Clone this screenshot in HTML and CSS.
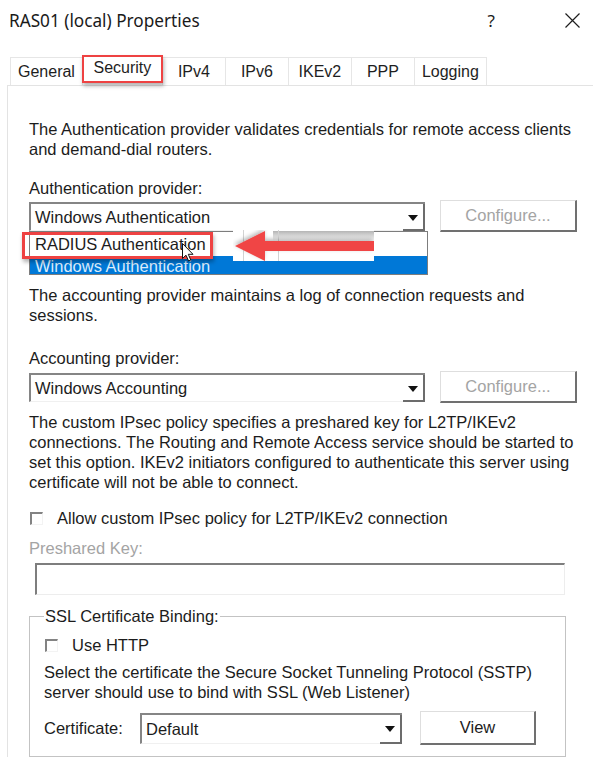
FILE: index.html
```html
<!DOCTYPE html>
<html>
<head>
<meta charset="utf-8">
<link rel="stylesheet" href="styles.css">
</head>
<body>
<div class="titlebar">
  <span class="title">RAS01 (local) Properties</span>
  <span class="help">?</span>
  <svg class="close" width="15" height="15" viewBox="0 0 15 15"><path d="M0.5 0.5 L14.5 14.5 M14.5 0.5 L0.5 14.5" stroke="#1e1e1e" stroke-width="1.2" fill="none"/></svg>
</div>
<div class="tabs">
  <div class="tab">General</div>
  <div class="tab tab-selected">Security</div>
  <div class="tab">IPv4</div>
  <div class="tab">IPv6</div>
  <div class="tab">IKEv2</div>
  <div class="tab">PPP</div>
  <div class="tab">Logging</div>
</div>
<div class="panel">
  <p class="text">The Authentication provider validates credentials for remote access clients<br>and demand-dial routers.</p>
  <div class="label label-auth">Authentication provider:</div>
  <div class="row">
    <div class="combo combo-wide">
      <span class="combo-value">Windows Authentication</span>
      <span class="drop"><span class="tri"></span></span>
      <div class="droplist">
        <div class="item">RADIUS Authentication</div>
        <div class="item item-hl">Windows Authentication</div>
      </div>
      <div class="redbox"></div>
      <svg class="arrow" width="141" height="31" viewBox="0 0 141 31">
        <defs>
          <linearGradient id="sh" x1="0" y1="0" x2="0" y2="1">
            <stop offset="0" stop-color="#b4b4b4"/>
            <stop offset="1" stop-color="#ffffff"/>
          </linearGradient>
          <filter id="ds" x="-20%" y="-60%" width="140%" height="220%">
            <feDropShadow dx="-1" dy="-2" stdDeviation="2" flood-color="#000" flood-opacity="0.28"/>
          </filter>
        </defs>
        <rect width="141" height="31" fill="#fff"/>
        <rect x="40" y="1" width="101" height="10" fill="url(#sh)"/>
        <path d="M10.5 0 V31 M45.5 0 V31" stroke="#d2d2d2" stroke-width="1"/>
        <path d="M2 16 L32 1 L32 11 L141 11 L141 21 L32 21 L32 31 Z" fill="#f04444" filter="url(#ds)"/>
      </svg>
      <svg class="cursor" width="12" height="19" viewBox="0 0 12 19"><path d="M0.5 0.5 V15.5 L4 12.2 L6.6 18 L8.8 17 L6.3 11.3 H11 Z" fill="#fff" stroke="#111" stroke-width="1"/></svg>
    </div>
    <div class="button button-disabled">Configure...</div>
  </div>
  <p class="text text-acct">The accounting provider maintains a log of connection requests and<br>sessions.</p>
  <div class="label label-acct">Accounting provider:</div>
  <div class="row row-acct">
    <div class="combo combo-wide">
      <span class="combo-value">Windows Accounting</span>
      <span class="drop"><span class="tri"></span></span>
    </div>
    <div class="button button-disabled">Configure...</div>
  </div>
  <p class="text text-ipsec">The custom IPsec policy specifies a preshared key for L2TP/IKEv2<br>connections. The Routing and Remote Access service should be started to<br>set this option. IKEv2 initiators configured to authenticate this server using<br>certificate will not be able to connect.</p>
  <div class="check-row check-ipsec">
    <span class="checkbox"></span>
    <span>Allow custom IPsec policy for L2TP/IKEv2 connection</span>
  </div>
  <div class="label label-disabled">Preshared Key:</div>
  <div class="textbox"></div>
  <fieldset class="group">
    <legend class="group-title">SSL Certificate Binding:</legend>
    <div class="check-row check-http">
      <span class="checkbox"></span>
      <span>Use HTTP</span>
    </div>
    <p class="text text-sstp">Select the certificate the Secure Socket Tunneling Protocol (SSTP)<br>server should use to bind with SSL (Web Listener)</p>
    <div class="cert-row">
      <span class="cert-label">Certificate:</span>
      <div class="combo combo-cert">
        <span class="combo-value">Default</span>
        <span class="drop"><span class="tri"></span></span>
      </div>
      <div class="button button-view">View</div>
    </div>
  </fieldset>
</div>
</body>
</html>
```
FILE: styles.css
```css
* { box-sizing: border-box; }
html, body { margin: 0; padding: 0; background: #fff; }
body {
  width: 593px;
  height: 769px;
  overflow: hidden;
  font-family: "Liberation Sans", Arial, sans-serif;
  font-size: 16.5px;
  color: #1c1c1c;
}

.titlebar {
  height: 40px;
  display: flex;
  align-items: center;
  padding: 0 13px 0 9px;
}
.title {
  flex: 1;
  font-family: "Noto Sans", sans-serif;
  font-size: 17.2px;
  color: #1a1a1a;
}
.help {
  font-family: "Noto Sans", sans-serif;
  font-size: 17px;
  color: #1a1a1a;
  margin-right: 70px;
}
.close { display: block; }

.tabs {
  display: flex;
  align-items: flex-end;
  height: 30px;
  margin-top: 15px;
  padding-left: 10px;
  position: relative;
  z-index: 2;
  font-size: 16px;
}
.tab {
  height: 28px;
  min-width: 64px;
  padding: 2px 7px 0;
  line-height: 24px;
  text-align: center;
  border: 1px solid #e6e6e6;
  border-bottom: none;
  margin-right: -1px;
  background: #fff;
  color: #1e1e1e;
}
.tab-selected {
  position: relative;
  z-index: 3;
  height: 28px;
  min-width: 81px;
  margin-bottom: 2px;
  padding: 0 9px;
  line-height: 22px;
  border: 2.5px solid #ee4242;
  box-shadow: 1px 3px 4px rgba(0, 0, 0, 0.3);
}

.panel {
  margin-left: 7px;
  border-top: 1px solid #e3e3e3;
  border-left: 1px solid #e3e3e3;
  padding: 33px 0 0 21px;
}

.text {
  margin: 0;
  line-height: 20px;
  white-space: nowrap;
}
.label { line-height: 20px; white-space: nowrap; }
.label-auth { margin-top: 19px; }
.label-acct { margin-top: 23px; }
.label-disabled { margin-top: 10px; color: #a4a4a4; }
.text-acct { margin-top: 53px; }
.text-ipsec { margin-top: 9px; }

.row {
  display: flex;
  align-items: flex-start;
  margin-top: 2px;
}
.row-acct { margin-top: 3px; }

.combo {
  position: relative;
  display: flex;
  align-items: center;
  height: 29px;
  margin-top: 2px;
  padding-left: 4px;
  border-top: 2px solid #858585;
  border-left: 2px solid #858585;
  border-bottom: 1px solid #f0f0f0;
  background: #fff;
}
.combo-wide { width: 396px; }
.combo-value { flex: 1; line-height: 20px; white-space: nowrap; }
.drop {
  align-self: stretch;
  width: 22px;
  display: flex;
  align-items: center;
  justify-content: center;
  border-right: 2px solid #6c6c6c;
  border-bottom: 2px solid #6c6c6c;
  margin-bottom: -1px;
}
.tri {
  width: 0;
  height: 0;
  border-left: 5px solid transparent;
  border-right: 5px solid transparent;
  border-top: 6px solid #111;
  margin-top: 2px;
}

.button {
  height: 32px;
  width: 137px;
  margin-left: 15px;
  display: flex;
  align-items: center;
  justify-content: center;
  border-top: 1px solid #dedede;
  border-left: 1px solid #dedede;
  border-right: 2px solid #707070;
  border-bottom: 2px solid #707070;
  background: #fff;
}
.button-disabled { color: #a4a4a4; }

.droplist {
  position: absolute;
  top: calc(100% + 1px);
  left: -2px;
  width: 399px;
  height: 44px;
  border: 1px solid #7d7d7d;
  background: #fff;
  z-index: 5;
}
.item {
  height: 24px;
  line-height: 24px;
  padding-left: 5px;
  white-space: nowrap;
}
.item-hl {
  height: 18px;
  line-height: 20px;
  overflow: hidden;
  background: #0078d7;
  color: #dcecfb;
}
.redbox {
  position: absolute;
  left: -9px;
  top: 28px;
  width: 191px;
  height: 27px;
  border: 3px solid #ee4242;
  box-shadow: 1px 3px 4px rgba(0, 0, 0, 0.3);
  z-index: 6;
}
.arrow {
  position: absolute;
  left: 202px;
  top: 26px;
  z-index: 7;
}
.cursor {
  position: absolute;
  left: 151px;
  top: 39px;
  z-index: 8;
}

.check-row {
  display: flex;
  align-items: center;
  height: 20px;
  white-space: nowrap;
}
.check-ipsec { margin-top: 16px; }
.checkbox {
  width: 13px;
  height: 13px;
  margin-left: 1px;
  margin-right: 14px;
  border-top: 2px solid #838383;
  border-left: 2px solid #838383;
  border-right: 1px solid #f3f3f3;
  border-bottom: 1px solid #f3f3f3;
}

.textbox {
  margin: 5px 0 0 6px;
  width: 530px;
  height: 32px;
  border-top: 2px solid #7e7e7e;
  border-left: 2px solid #7e7e7e;
  border-right: 1px solid #ededed;
  border-bottom: 1px solid #ededed;
}

.group {
  margin: 11px 0 0 0;
  width: 537px;
  border: 1px solid #c3c3c3;
  padding: 0 0 11px 14px;
  min-width: 0;
}
.group-title {
  padding: 0 1px;
  line-height: 20px;
}
.check-http { margin-top: 9px; }
.text-sstp { margin-top: 7px; }

.cert-row {
  display: flex;
  align-items: center;
  margin-top: 9px;
  height: 34px;
}
.cert-label { width: 96px; white-space: nowrap; }
.combo-cert { width: 262px; height: 31px; margin-top: 0; }
.button-view { width: 116px; height: 34px; margin-left: 18px; }
```
